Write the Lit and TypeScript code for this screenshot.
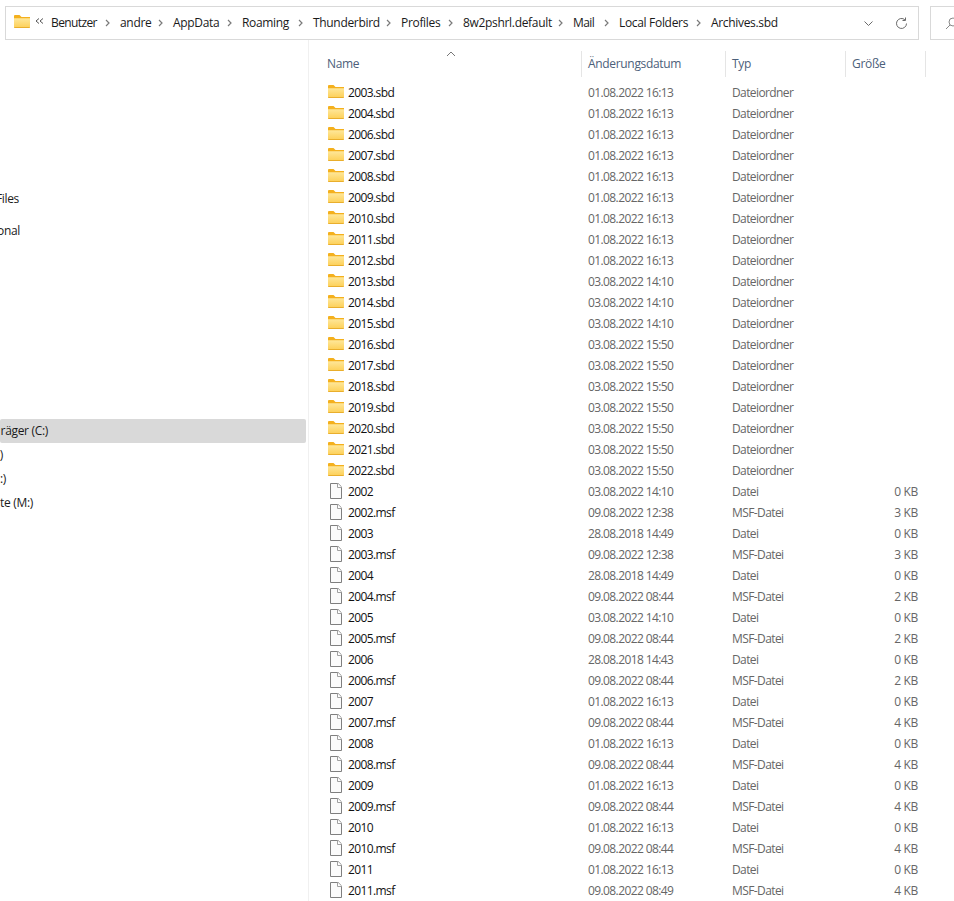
import { LitElement, html, css } from "lit";
import { customElement } from "lit/decorators.js";

const crumbs: [string, number][] = [["Benutzer",69],["andre",53],["AppData",69],["Roaming",71],["Thunderbird",88],["Profiles",62],["8w2pshrl.default",110],["Mail",46],["Local Folders",92],["Archives.sbd",0]];
type R = [string,string,string,string];
const F="Dateiordner";
const rows: R[] = [
 ["2003.sbd","01.08.2022 16:13",F,""],["2004.sbd","01.08.2022 16:13",F,""],["2006.sbd","01.08.2022 16:13",F,""],
 ["2007.sbd","01.08.2022 16:13",F,""],["2008.sbd","01.08.2022 16:13",F,""],["2009.sbd","01.08.2022 16:13",F,""],
 ["2010.sbd","01.08.2022 16:13",F,""],["2011.sbd","01.08.2022 16:13",F,""],["2012.sbd","01.08.2022 16:13",F,""],
 ["2013.sbd","03.08.2022 14:10",F,""],["2014.sbd","03.08.2022 14:10",F,""],["2015.sbd","03.08.2022 14:10",F,""],
 ["2016.sbd","03.08.2022 15:50",F,""],["2017.sbd","03.08.2022 15:50",F,""],["2018.sbd","03.08.2022 15:50",F,""],
 ["2019.sbd","03.08.2022 15:50",F,""],["2020.sbd","03.08.2022 15:50",F,""],["2021.sbd","03.08.2022 15:50",F,""],
 ["2022.sbd","03.08.2022 15:50",F,""],
 ["2002","03.08.2022 14:10","Datei","0 KB"],["2002.msf","09.08.2022 12:38","MSF-Datei","3 KB"],
 ["2003","28.08.2018 14:49","Datei","0 KB"],["2003.msf","09.08.2022 12:38","MSF-Datei","3 KB"],
 ["2004","28.08.2018 14:49","Datei","0 KB"],["2004.msf","09.08.2022 08:44","MSF-Datei","2 KB"],
 ["2005","03.08.2022 14:10","Datei","0 KB"],["2005.msf","09.08.2022 08:44","MSF-Datei","2 KB"],
 ["2006","28.08.2018 14:43","Datei","0 KB"],["2006.msf","09.08.2022 08:44","MSF-Datei","2 KB"],
 ["2007","01.08.2022 16:13","Datei","0 KB"],["2007.msf","09.08.2022 08:44","MSF-Datei","4 KB"],
 ["2008","01.08.2022 16:13","Datei","0 KB"],["2008.msf","09.08.2022 08:44","MSF-Datei","4 KB"],
 ["2009","01.08.2022 16:13","Datei","0 KB"],["2009.msf","09.08.2022 08:44","MSF-Datei","4 KB"],
 ["2010","01.08.2022 16:13","Datei","0 KB"],["2010.msf","09.08.2022 08:44","MSF-Datei","4 KB"],
 ["2011","01.08.2022 16:13","Datei","0 KB"],["2011.msf","09.08.2022 08:49","MSF-Datei","4 KB"],
];

const folder = html`<svg class="ficon" width="16" height="13" viewBox="0 0 16 13">
  <defs><linearGradient id="fb" x1="0" y1="0" x2="0" y2="1"><stop offset="0" stop-color="#fee79a"/><stop offset="1" stop-color="#fdcf55"/></linearGradient></defs>
  <path d="M0 1.2C0 .5.5 0 1.2 0h4.3l2 2H16v2H0z" fill="#f4b01d"/>
  <path d="M0 3.2h16v8.6c0 .7-.5 1.2-1.2 1.2H1.2C.5 13 0 12.5 0 11.8z" fill="url(#fb)"/>
  <path d="M0 12.1h16c0 .5-.4.9-.9.9H.9c-.5 0-.9-.4-.9-.9z" fill="#e9ae2c"/>
</svg>`;
const file = html`<svg class="dicon" width="12" height="16" viewBox="0 0 12 16">
  <path d="M.5.5h7.6l3.4 3.4v11.6H.5z" fill="#fbfbfb" stroke="#7f7f7f"/>
  <path d="M7.5.5v4h4" fill="#fff" stroke="#a0a0a0"/>
</svg>`;
const sep = html`<svg width="5" height="8" viewBox="0 0 5 8"><path d="M1 1l3 3-3 3" fill="none" stroke="#7a7a7a" stroke-width="1.2"/></svg>`;

@customElement("app-root")
export class AppRoot extends LitElement {
  static styles = css`
    :host { display:block; width:954px; height:901px; overflow:hidden; background:#fff;
      font:12px/16px "Open Sans","Noto Sans",sans-serif; letter-spacing:-.32px; color:#1a1a1a; }
    .top { display:flex; height:34px; padding:6px 0 0 5px; box-sizing:content-box; gap:11px; }
    .addr { width:912px; height:32px; border:1px solid #d9d9d9; display:flex; align-items:center; flex:none; }
    .addr .ficon { margin-left:8px; margin-bottom:3px; flex:none; }
    .back { margin:0 7px 4px 5px; flex:none; display:block; }
    .crumbs { display:flex; align-items:center; flex:1; white-space:nowrap; }
    .crumb { display:flex; align-items:center; justify-content:space-between; padding-right:10px; box-sizing:border-box; flex:none; }
    .crumb svg { flex:none; }
    .crumb.tight { letter-spacing:-.62px; }
    .tools { display:flex; align-items:center; gap:22px; margin-right:10px; }
    .search { flex:none; width:40px; height:32px; border:1px solid #d9d9d9; border-right:none; display:flex; align-items:center; padding-left:14px; }
    .main { display:flex; }
    .side { width:309px; height:861px; flex:none; border-right:1px solid #f0f0f0; padding-top:147px; box-sizing:border-box; }
    .nav { height:24px; width:306px; display:flex; align-items:center; border-radius:2px; white-space:nowrap; }
    .nav span { display:block; }
    .nav.gap { margin-top:8px; }
    .nav.drive { margin-top:176px; background:#d9d9d9; }
    .list { flex:1; padding-left:18px; position:relative; }
    .sort { position:absolute; left:137px; top:11px; }
    .head { display:grid; grid-template-columns:255px 144px 120px 80px; height:26px; margin-top:11px; color:#4c607a; }
    .head div { display:flex; align-items:center; border-right:1px solid #e5e5e5; padding-left:6px; }
    .head div:first-child { padding-left:0; }
    .rows { margin-top:5px; }
    .row { display:grid; grid-template-columns:260px 144px 120px 67px; height:21px; align-items:center; color:#666; letter-spacing:-.6px; }
    .name { display:flex; align-items:center; color:#111; padding-left:1px; }
    .ficon { display:block; }
    .name .ficon { margin:0 4px 2px 0; }
    .name .dicon { margin:0 6px 1px 2px; }
    .date, .type { padding-left:1px; }
    .size { text-align:right; letter-spacing:-.32px; }
  `;
  nav(t: string, right: number, cls = "") {
    return html`<div class="nav ${cls}"><span style="margin-left:${right}px;transform:translateX(-100%)">${t}</span></div>`;
  }
  render() {
    return html`
      <div class="top">
        <div class="addr">
          ${folder}
          <svg class="back" width="9" height="6" viewBox="0 0 9 6"><path d="M4 .5L1 3l3 2.5M8 .5L5 3l3 2.5" fill="none" stroke="#555"/></svg>
          <div class="crumbs">
            ${crumbs.map(([c,w],i)=>i<crumbs.length-1
              ? html`<div class="crumb ${c==="Benutzer"||c==="Mail"?"tight":""}" style="width:${w}px"><span>${c}</span>${sep}</div>`
              : html`<span class="last">${c}</span>`)}
          </div>
          <div class="tools">
            <svg width="9" height="5" viewBox="0 0 9 5"><path d="M.5.5l4 4 4-4" fill="none" stroke="#6a6a6a"/></svg>
            <svg width="13" height="13" viewBox="0 0 13 13"><path d="M11.5 6.5a5 5 0 1 1-1.6-3.7M10.5 .5v3h-3" fill="none" stroke="#6a6a6a"/></svg>
          </div>
        </div>
        <div class="search">
          <svg width="13" height="13" viewBox="0 0 13 13"><circle cx="8" cy="5" r="4" fill="none" stroke="#888"/><path d="M5 8L1 12" stroke="#888"/></svg>
        </div>
      </div>
      <div class="main">
        <div class="side">
          ${this.nav("Files",19)}
          ${this.nav("onal",20,"gap")}
          ${this.nav("räger (C:)",48,"drive")}
          ${this.nav(")",3)}
          ${this.nav(":)",6)}
          ${this.nav("te (M:)",33)}
        </div>
        <div class="list">
          <svg class="sort" width="10" height="6" viewBox="0 0 10 6"><path d="M1 5l4-4 4 4" fill="none" stroke="#777"/></svg>
          <div class="head"><div>Name</div><div>Änderungsdatum</div><div>Typ</div><div>Größe</div></div>
          <div class="rows">
            ${rows.map(r=>html`<div class="row">
              <div class="name">${r[3]?file:folder}<span>${r[0]}</span></div>
              <div class="date">${r[1]}</div><div class="type">${r[2]}</div><div class="size">${r[3]}</div>
            </div>`)}
          </div>
        </div>
      </div>`;
  }
}
